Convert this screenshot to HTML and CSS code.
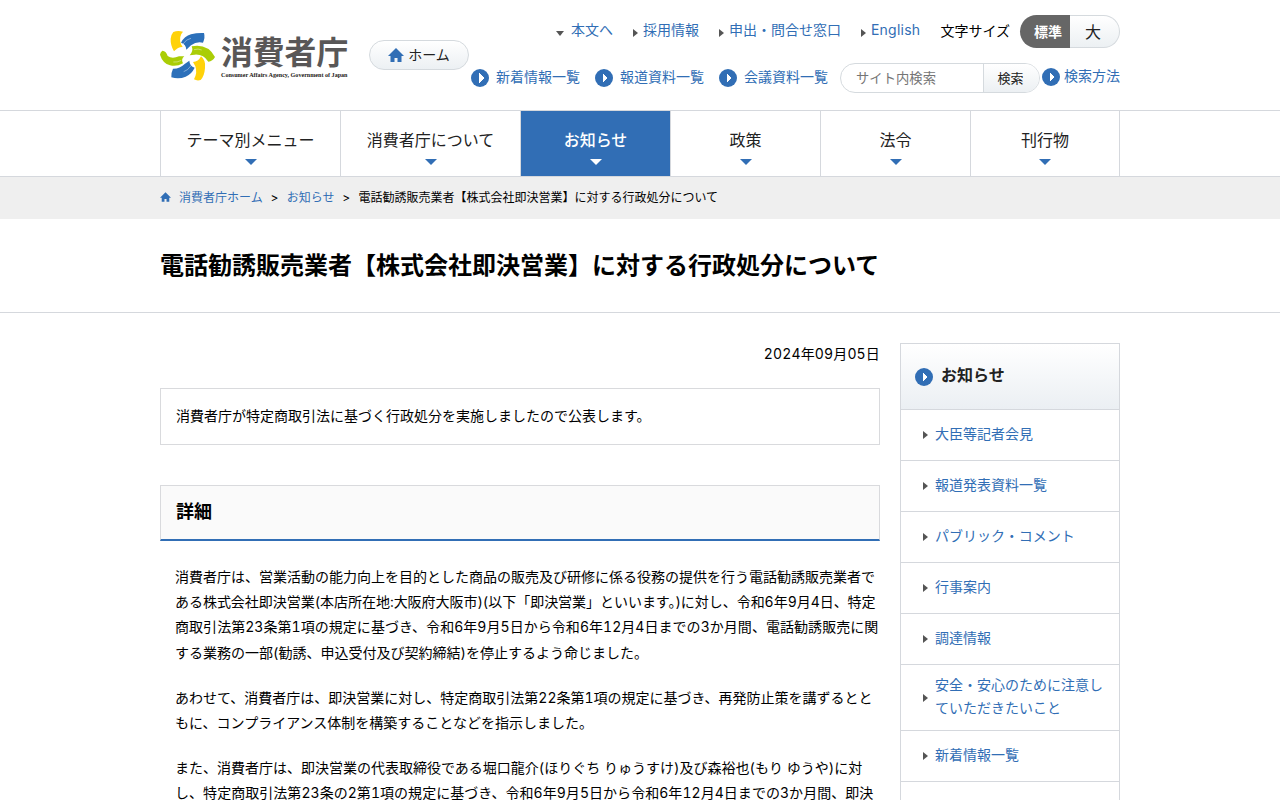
FILE: index.html
```html
<!DOCTYPE html>
<html lang="ja">
<head>
  <meta charset="UTF-8">
  <meta name="viewport" content="width=device-width, initial-scale=1.0">
  <title>電話勧誘販売業者【株式会社即決営業】に対する行政処分について | 消費者庁</title>
  <link rel="stylesheet" href="styles.css">
</head>
<body>

<header id="header">
  <div class="inner headerInner">
    <a href="#" class="logo">
      <svg class="logoMark" viewBox="15 15 168 156" aria-hidden="true">
        <path fill="#ffd20a" d="M55 21Q68 16 84 20Q70 34 78 58L83 66Q70 65 57 79Q46 60 47 41Q48 29 55 21Z"/>
        <path fill="#2c70ba" d="M147 24Q151 37 144 53Q125 48 108 61L94 74Q93 58 78 53Q88 34 108 28Q126 23 147 24Z"/>
        <path fill="#aacd06" d="M110 64Q158 55 180 96Q173 109 160 110Q145 87 119 89L104 91Q116 78 110 64Z"/>
        <path fill="#ffd20a" d="M138 94Q153 105 150 130Q148 154 137 165Q126 168 117 163Q128 143 121 124L114 111Q130 111 138 94Z"/>
        <path fill="#2c70ba" d="M54 131Q73 132 89 117L103 107Q104 124 119 128Q110 147 92 155Q72 164 49 157Q48 143 54 131Z"/>
        <path fill="#aacd06" d="M22 77Q34 78 38 93Q51 103 72 94L88 94Q77 103 84 115Q65 126 45 121Q23 115 15 89Q16 81 22 77Z"/>
        <path class="logoLine" d="M84 57Q94 42 108 40M117 74Q130 70 140 75M109 121Q98 137 86 140M79 106Q66 113 55 111"/>
      </svg>
      <span class="logoText">
        <span class="logoName">消費者庁</span>
        <span class="logoEn">Consumer Affairs Agency, Government of Japan</span>
      </span>
    </a>
    <a href="#" class="homeBtn">
      <svg class="homeIcon" viewBox="0 0 16 14" aria-hidden="true"><path d="M8 0L16 8H13.500V14H9.500V10H6.500V14H2.500V8H0Z"/></svg>
      ホーム
    </a>
    <div class="headerNav">
      <ul class="subNav">
        <li class="down"><a href="#">本文へ</a></li>
        <li><a href="#">採用情報</a></li>
        <li><a href="#">申出・問合せ窓口</a></li>
        <li><a href="#" class="english">English</a></li>
        <li class="sizeLabel">文字サイズ</li>
        <li class="fontSize"><button class="on">標準</button><button>大</button></li>
      </ul>
      <div class="searchNav">
        <a href="#" class="circleLink">新着情報一覧</a>
        <a href="#" class="circleLink">報道資料一覧</a>
        <a href="#" class="circleLink">会議資料一覧</a>
        <form class="search">
          <input type="text" placeholder="サイト内検索" aria-label="サイト内検索">
          <button type="button">検索</button>
        </form>
        <a href="#" class="circleLink howto">検索方法</a>
      </div>
    </div>
  </div>
</header>

<nav id="gnav">
  <ul class="inner">
    <li class="wide"><a href="#">テーマ別メニュー</a></li>
    <li class="wide"><a href="#">消費者庁について</a></li>
    <li class="current"><a href="#">お知らせ</a></li>
    <li><a href="#">政策</a></li>
    <li><a href="#">法令</a></li>
    <li><a href="#">刊行物</a></li>
  </ul>
</nav>

<div id="breadcrumb">
  <div class="inner">
    <svg class="crumbIcon" viewBox="0 0 16 14" aria-hidden="true"><path d="M8 0L16 8H13.500V14H9.500V10H6.500V14H2.500V8H0Z"/></svg>
    <a href="#">消費者庁ホーム</a><span class="gt">&gt;</span><a href="#">お知らせ</a><span class="gt">&gt;</span><span>電話勧誘販売業者【株式会社即決営業】に対する行政処分について</span>
  </div>
</div>

<div id="pageTitle">
  <h1 class="inner">電話勧誘販売業者【株式会社即決営業】に対する行政処分について</h1>
</div>

<div class="inner contents">
  <main>
    <p class="date">2024年09月05日</p>
    <p class="lead">消費者庁が特定商取引法に基づく行政処分を実施しましたので公表します。</p>
    <h2>詳細</h2>
    <div class="text">
      <p>消費者庁は、営業活動の能力向上を目的とした商品の販売及び研修に係る役務の提供を行う電話勧誘販売業者で<br><span class="tight">ある株式会社即決営業(本店所在地:大阪府大阪市)(以下「即決営業」といいます。)に対し、令和6年9月4日、特定</span><br><span class="loose">商取引法第23条第1項の規定に基づき、令和6年9月5日から令和6年12月4日までの3か月間、電話勧誘販売に関</span><br>する業務の一部(勧誘、申込受付及び契約締結)を停止するよう命じました。</p>
      <p>あわせて、消費者庁は、即決営業に対し、特定商取引法第22条第1項の規定に基づき、再発防止策を講ずるとと<br>もに、コンプライアンス体制を構築することなどを指示しました。</p>
      <p>また、消費者庁は、即決営業の代表取締役である堀口龍介(ほりぐち りゅうすけ)及び森裕也(もり ゆうや)に対<br><span class="loose">し、特定商取引法第23条の2第1項の規定に基づき、令和6年9月5日から令和6年12月4日までの3か月間、即決</span></p>
    </div>
  </main>

  <aside>
    <h2><a href="#">お知らせ</a></h2>
    <ul>
      <li><a href="#">大臣等記者会見</a></li>
      <li><a href="#">報道発表資料一覧</a></li>
      <li><a href="#">パブリック・コメント</a></li>
      <li><a href="#">行事案内</a></li>
      <li><a href="#">調達情報</a></li>
      <li><a href="#">安全・安心のために注意していただきたいこと</a></li>
      <li><a href="#">新着情報一覧</a></li>
      <li></li>
    </ul>
  </aside>
</div>

</body>
</html>
```
FILE: styles.css
```css
html {
  height: 100%;
  overflow: hidden;
}

body {
  height: 100%;
  margin: 0;
  overflow: hidden;
  font-family: Inter, "Noto Sans CJK JP", sans-serif;
  font-size: 14px;
  line-height: 1.8;
  color: #000;
  background: #fff;
  font-variant-numeric: tabular-nums;
}

ul, p, h1, h2 {
  margin: 0;
  padding: 0;
}

ul {
  list-style: none;
}

a {
  color: #316eb5;
  text-decoration: none;
}

button, input {
  font-family: inherit;
  padding: 0;
  margin: 0;
}

.inner {
  box-sizing: border-box;
  width: 960px;
  margin: 0 auto;
}

/* header */
#header {
  height: 110px;
}

.headerInner {
  display: flex;
}

.logo {
  display: flex;
  width: 209px;
  padding-top: 30px;
}

.logoMark {
  width: 56px;
  height: 52px;
}

.logoLine {
  fill: none;
  stroke: #fff;
  stroke-width: 1.2;
}

.logoText {
  display: block;
  margin: 3px 0 0 5px;
  white-space: nowrap;
}

.logoName {
  display: block;
  font-size: 31.8px;
  line-height: 40px;
  font-weight: 700;
  color: #595757;
}

.logoEn {
  display: block;
  margin-top: -2px;
  font: bold 6.1px/9px "Liberation Serif", serif;
  color: #231815;
}

.homeBtn {
  display: flex;
  align-items: center;
  justify-content: center;
  gap: 4px;
  box-sizing: border-box;
  width: 100px;
  height: 30px;
  margin-top: 40px;
  border: 1px solid #d5dade;
  border-radius: 15px;
  background: linear-gradient(#fff, #ecf0f3);
  color: #222;
}

.homeIcon {
  width: 16px;
  height: 14px;
  fill: #316eb5;
}

.headerNav {
  flex: 1;
  padding-top: 15px;
}

.subNav {
  display: flex;
  justify-content: flex-end;
  height: 33px;
  line-height: 29px;
}

.subNav li {
  display: flex;
  margin-left: 20px;
}

.subNav li:not(.sizeLabel):not(.fontSize)::before {
  content: "";
  margin: 14px 5px 0 0;
  height: 0;
  border: 4px solid transparent;
  border-left: 5px solid #555;
  border-right: 0;
}

.subNav li.down::before {
  margin: 16px 7px 0 0 !important;
  border: 4px solid transparent !important;
  border-top: 5px solid #555 !important;
  border-bottom: 0 !important;
}

.english {
  letter-spacing: 0.25px;
}

.subNav .sizeLabel {
  line-height: 32px;
}

.subNav .fontSize {
  margin-left: 10px;
}

.fontSize button {
  box-sizing: border-box;
  width: 50px;
  height: 33px;
  padding: 0 3px 2px 0;
  border: 1px solid #d5dade;
  border-left: 0;
  border-radius: 0 17px 17px 0;
  background: linear-gradient(#fff, #ecf0f3);
  color: #222;
  font-size: 16px;
}

.fontSize .on {
  border: 0;
  border-radius: 17px 0 0 17px;
  padding: 0 0 1px 6px;
  background: #666;
  color: #fff;
  font-size: 14px;
  font-weight: bold;
}

.searchNav {
  display: flex;
  justify-content: flex-end;
  margin-top: 15px;
  height: 30px;
  line-height: 28px;
}

.circleLink {
  display: flex;
  margin-right: 15px;
}

.circleLink:nth-child(3) {
  margin-right: 12px;
}

.circleLink::before,
aside h2::before {
  content: "";
  width: 18px;
  height: 18px;
  margin: 6px 7px 0 0;
  border-radius: 50%;
  background: conic-gradient(from 225deg at 100% 50%, #fff 90deg, transparent 0) 8px 4px / 5px 10px no-repeat #316eb5;
}

.search {
  display: flex;
  box-sizing: border-box;
  width: 200px;
  height: 30px;
  overflow: hidden;
  border: 1px solid #d5dade;
  border-radius: 15px;
}

.search input {
  flex: 1;
  width: 0;
  border: 0;
  padding-left: 15px;
  background: none;
  font-size: 13.333px;
}

.search input::placeholder {
  color: #757575;
}

.search button {
  width: 56px;
  padding: 0 2px 1px 0;
  border: 0;
  border-left: 1px solid #d5dade;
  background: linear-gradient(#fff, #ecf0f3);
  font-size: 13px;
  color: #222;
}

.circleLink.howto {
  margin: 0 0 0 2px;
  line-height: 26px;
}

.circleLink.howto::before {
  margin: 5px 4px 0 0;
}

/* global navigation */
#gnav {
  border-top: 1px solid #d5d8dd;
  border-bottom: 1px solid #d5d8dd;
}

#gnav ul {
  display: flex;
  border-left: 1px solid #d5d8dd;
}

#gnav li {
  box-sizing: border-box;
  width: 150px;
  height: 65px;
  border-right: 1px solid #d5d8dd;
}

#gnav .wide {
  width: 180px;
}

#gnav li:last-child {
  width: 149px;
}

#gnav a {
  display: block;
  height: 65px;
  font-size: 16px;
  line-height: 58px;
  text-align: center;
  color: #222;
}

#gnav a::after {
  content: "";
  display: block;
  width: 0;
  margin: -10px auto 0;
  border: 6px solid transparent;
  border-top-color: #316eb5;
  border-bottom: 0;
}

#gnav .current a {
  background: #316eb5;
  color: #fff;
  font-weight: 500;
}

#gnav .current a::after {
  border-top-color: #fff;
}

/* breadcrumb */
#breadcrumb {
  height: 42px;
  background: #efefef;
  font-size: 12px;
  line-height: 41px;
}

#breadcrumb .inner {
  display: flex;
}

.crumbIcon {
  width: 11px;
  height: 10px;
  margin: 15px 8px 0 0;
  fill: #316eb5;
}

.gt {
  width: 24px;
  text-align: center;
}

#pageTitle {
  height: 93px;
  border-bottom: 1px solid #d5d8dd;
}

#pageTitle h1 {
  font-size: 24px;
  line-height: 93px;
}

/* contents */
.contents {
  display: flex;
  justify-content: space-between;
  padding-top: 30px;
}

main {
  width: 720px;
}

.date {
  height: 45px;
  line-height: 22px;
  text-align: right;
  letter-spacing: 0.15px;
}

.lead {
  border: 1px solid #d9dadd;
  padding: 0 15px 2px;
  line-height: 53px;
}

main h2 {
  margin-top: 40px;
  padding: 0 0 1px 15px;
  border: 1px solid #d9dadd;
  border-bottom: 2px solid #316eb5;
  background: #fafafa;
  font-size: 18px;
  line-height: 52px;
}

.text {
  padding: 23px 0 0 15px;
  white-space: nowrap;
}

.text p {
  margin-bottom: 20px;
}

.tight {
  letter-spacing: -0.035px;
}

.loose {
  letter-spacing: 0.045px;
}

/* side menu */
aside {
  box-sizing: border-box;
  width: 220px;
  border: 1px solid #d5d8dd;
  border-bottom: 0;
}

aside h2 {
  display: flex;
  height: 65px;
  padding-left: 14px;
  background: linear-gradient(#fff, #ebeff3);
  font-size: 16px;
  line-height: 63px;
}

aside h2::before {
  margin: 24px 8px 0 0;
}

aside h2 a {
  color: #222;
}

aside li {
  display: flex;
  align-items: center;
  box-sizing: border-box;
  min-height: 51px;
  padding: 10px 14px 10px 22px;
  border-top: 1px solid #d5d8dd;
  line-height: 22.500px;
}

aside li a {
  margin: -1px 0 1px;
}

aside li::before {
  content: "";
  flex: none;
  margin-right: 7px;
  border: 4px solid transparent;
  border-left: 5px solid #555;
  border-right: 0;
}
```
